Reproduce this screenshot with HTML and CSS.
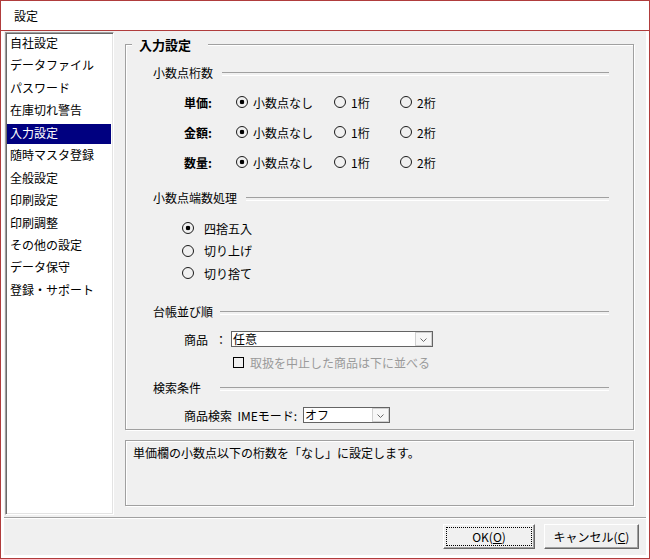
FILE: index.html
```html
<!DOCTYPE html>
<html lang="ja">
<head>
    <meta charset="UTF-8">
    <title>設定</title>
    <link rel="stylesheet" href="styles.css">
</head>
<body>
<div class="window">
    <div class="titlebar">設定</div>

    <div class="client">
        <div class="main">
            <!-- left menu -->
            <ul class="menu">
                <li>自社設定</li>
                <li>データファイル</li>
                <li>パスワード</li>
                <li>在庫切れ警告</li>
                <li class="selected">入力設定</li>
                <li>随時マスタ登録</li>
                <li>全般設定</li>
                <li>印刷設定</li>
                <li>印刷調整</li>
                <li>その他の設定</li>
                <li>データ保守</li>
                <li>登録・サポート</li>
            </ul>

            <div class="content">
                <div class="group">
                    <div class="group-title">入力設定</div>
                    <div class="group-body">

                        <div class="section first"><span>小数点桁数</span></div>
                        <div class="digit-row first">
                            <span class="row-label">単価:</span>
                            <label class="opt col1"><input type="radio" class="radio" name="tanka" checked>小数点なし</label>
                            <label class="opt col2"><input type="radio" class="radio" name="tanka">1桁</label>
                            <label class="opt"><input type="radio" class="radio" name="tanka">2桁</label>
                        </div>
                        <div class="digit-row">
                            <span class="row-label">金額:</span>
                            <label class="opt col1"><input type="radio" class="radio" name="kingaku" checked>小数点なし</label>
                            <label class="opt col2"><input type="radio" class="radio" name="kingaku">1桁</label>
                            <label class="opt"><input type="radio" class="radio" name="kingaku">2桁</label>
                        </div>
                        <div class="digit-row">
                            <span class="row-label">数量:</span>
                            <label class="opt col1"><input type="radio" class="radio" name="suryo" checked>小数点なし</label>
                            <label class="opt col2"><input type="radio" class="radio" name="suryo">1桁</label>
                            <label class="opt"><input type="radio" class="radio" name="suryo">2桁</label>
                        </div>

                        <div class="section round-head"><span>小数点端数処理</span></div>
                        <div class="round-list">
                            <label class="round-row"><input type="radio" class="radio" name="hasu" checked>四捨五入</label>
                            <label class="round-row"><input type="radio" class="radio" name="hasu">切り上げ</label>
                            <label class="round-row"><input type="radio" class="radio" name="hasu">切り捨て</label>
                        </div>

                        <div class="section fixed order-head"><span>台帳並び順</span></div>
                        <div class="field-row item-row">
                            <span class="item-label">商品</span><span class="colon">：</span>
                            <div class="combo wide">
                                <span class="combo-text">任意</span>
                                <span class="combo-btn"><svg width="7" height="4" viewBox="0 0 7 4"><path d="M0.5 0.5 L3.5 3.5 L6.5 0.5" fill="none" stroke="#6a6a6a"/></svg></span>
                            </div>
                        </div>
                        <label class="check-row"><input type="checkbox" class="check">取扱を中止した商品は下に並べる</label>

                        <div class="section fixed search-head"><span>検索条件</span></div>
                        <div class="field-row ime-row">
                            <span class="ime-label">商品検索&nbsp; IMEモード:</span>
                            <div class="combo narrow">
                                <span class="combo-text">オフ</span>
                                <span class="combo-btn"><svg width="7" height="4" viewBox="0 0 7 4"><path d="M0.5 0.5 L3.5 3.5 L6.5 0.5" fill="none" stroke="#6a6a6a"/></svg></span>
                            </div>
                        </div>

                    </div>
                </div>

                <div class="desc">単価欄の小数点以下の桁数を「なし」に設定します。</div>
            </div>
        </div>

        <div class="footer">
            <button class="btn ok">OK(<u>O</u>)</button>
            <button class="btn cancel">キャンセル(<u>C</u>)</button>
        </div>
    </div>
</div>
</body>
</html>
```

FILE: styles.css
```css
* {
    box-sizing: border-box;
}

body {
    margin: 0;
    font-family: "Noto Sans CJK JP", "Noto Sans", sans-serif;
    font-size: 12px;
    color: #000;
}

/* Window frame */
.window {
    width: 650px;
    height: 559px;
    border: 1px solid #b03c3c;
    background: #fff;
    display: flex;
    flex-direction: column;
}

.titlebar {
    height: 30px;
    border-bottom: 1px solid #b03c3c;
    padding-left: 13px;
    line-height: 29px;
}

.client {
    flex: 1;
    margin: 0 3px 3px;
    background: #f0f0f0;
    display: flex;
    flex-direction: column;
}

.main {
    height: 486px;
    display: flex;
}

/* Left menu */
.menu {
    width: 109px;
    height: 483px;
    margin: 1px 0 0 1px;
    padding: 1px;
    list-style: none;
    background: #fff;
    border: 1px solid;
    border-color: #a0a0a0 #fff #fff #a0a0a0;
    box-shadow: inset 1px 1px #696969, inset -1px -1px #e3e3e3;
}

.menu li {
    height: 20px;
    margin: 0 1px 2.45px 0;
    padding: 0 0 3px 3px;
    line-height: 17px;
    white-space: nowrap;
}

.menu li.selected {
    background: #000080;
    color: #fff;
}

/* Right side */
.content {
    flex: 1;
    margin: 0 12px 0 11px;
    display: flex;
    flex-direction: column;
}

.group {
    height: 386px;
    margin-top: 13px;
    border: 1px solid #a0a0a0;
    box-shadow: inset 1px 1px #fff, 1px 1px #fff;
}

.group-title {
    width: fit-content;
    height: 17px;
    margin: -9px 0 0 6px;
    padding: 0 17px 0 7px;
    background: #f0f0f0;
    font-size: 13px;
    font-weight: bold;
    line-height: 17px;
}

.group-body {
    padding: 0 24px 0 27px;
}

/* section header with rule */
.section {
    display: flex;
    align-items: center;
    height: 14px;
    line-height: 14px;
}

.section span {
    padding-right: 9px;
    white-space: nowrap;
}

.section.fixed span {
    width: 67px;
    padding-right: 0;
}

.section::after {
    content: "";
    flex: 1;
    height: 2px;
    margin-top: 2px;
    border-top: 1px solid #a0a0a0;
    border-bottom: 1px solid #fff;
}

.section.first { margin-top: 13px; }
.round-head { margin-top: 14px; }
.order-head { margin-top: 20.5px; }
.search-head { margin-top: 11px; }

/* digit rows */
.digit-row {
    display: flex;
    align-items: center;
    height: 30px;
    padding-left: 31px;
}

.digit-row.first {
    margin-top: 7px;
}

.row-label {
    width: 52px;
    font-weight: bold;
}

.opt {
    display: flex;
    align-items: center;
    white-space: nowrap;
}

.col1 { width: 98px; }
.col2 { width: 66px; }

.radio {
    appearance: none;
    width: 12px;
    height: 12px;
    margin: 0 5px 0 0;
    border: 1px solid #1a1a1a;
    border-radius: 50%;
    background: #f0f0f0;
    flex-shrink: 0;
}

.radio:checked {
    background: radial-gradient(circle, #000 0, #000 2px, transparent 2.6px), #f0f0f0;
}

/* rounding */
.round-list {
    margin-top: 12px;
    padding-left: 29px;
}

.round-row {
    display: flex;
    align-items: center;
    height: 22.5px;
}

.round-row .radio {
    margin-right: 10px;
}

/* combo rows */
.field-row {
    display: flex;
    align-items: center;
    height: 16px;
    padding-left: 31px;
}

.item-row { margin-top: 12px; }
.ime-row { margin-top: 12px; }

.item-label {
    width: 31px;
}

.colon {
    width: 12px;
    margin-right: 4px;
}

.ime-label {
    width: 119px;
    white-space: nowrap;
}

.combo {
    display: flex;
    height: 16px;
    border: 1px solid #646464;
    background: #fff;
}

.combo.wide { width: 202px; }
.combo.narrow { width: 87px; }

.combo-text {
    flex: 1;
    padding-left: 1px;
    line-height: 14px;
}

.combo-btn {
    width: 17px;
    border: 1px solid #d0d0d0;
    background: #f7f7f7;
    display: flex;
    align-items: flex-end;
    justify-content: center;
    padding-bottom: 3px;
}

.check-row {
    display: flex;
    align-items: center;
    height: 16px;
    margin-top: 7px;
    padding-left: 80px;
    color: #9a9a9a;
}

.check {
    appearance: none;
    width: 11px;
    height: 11px;
    margin: 0 6px 0 0;
    border: 1px solid #000;
    background: #f0f0f0;
}

/* description */
.desc {
    height: 66px;
    margin-top: 10px;
    padding: 3px 7px;
    line-height: 17px;
    border: 1px solid #a0a0a0;
    box-shadow: inset 1px 1px #fff, 1px 1px #fff;
}

/* bottom buttons */
.footer {
    flex: 1;
    display: flex;
    justify-content: flex-end;
    gap: 9px;
    padding: 6px 7px 0 0;
    border-top: 1px solid #a0a0a0;
    box-shadow: inset 0 1px #fff;
}

.btn {
    height: 25px;
    padding: 0;
    font: inherit;
    color: #000;
    background: #f0f0f0;
    border: 1px solid;
    border-color: #fff #696969 #696969 #fff;
    box-shadow: inset -1px -1px #a0a0a0;
}

.btn.ok {
    width: 92px;
    outline: 1px dotted #000;
    outline-offset: -4px;
}

.btn.cancel {
    width: 95px;
}
```
